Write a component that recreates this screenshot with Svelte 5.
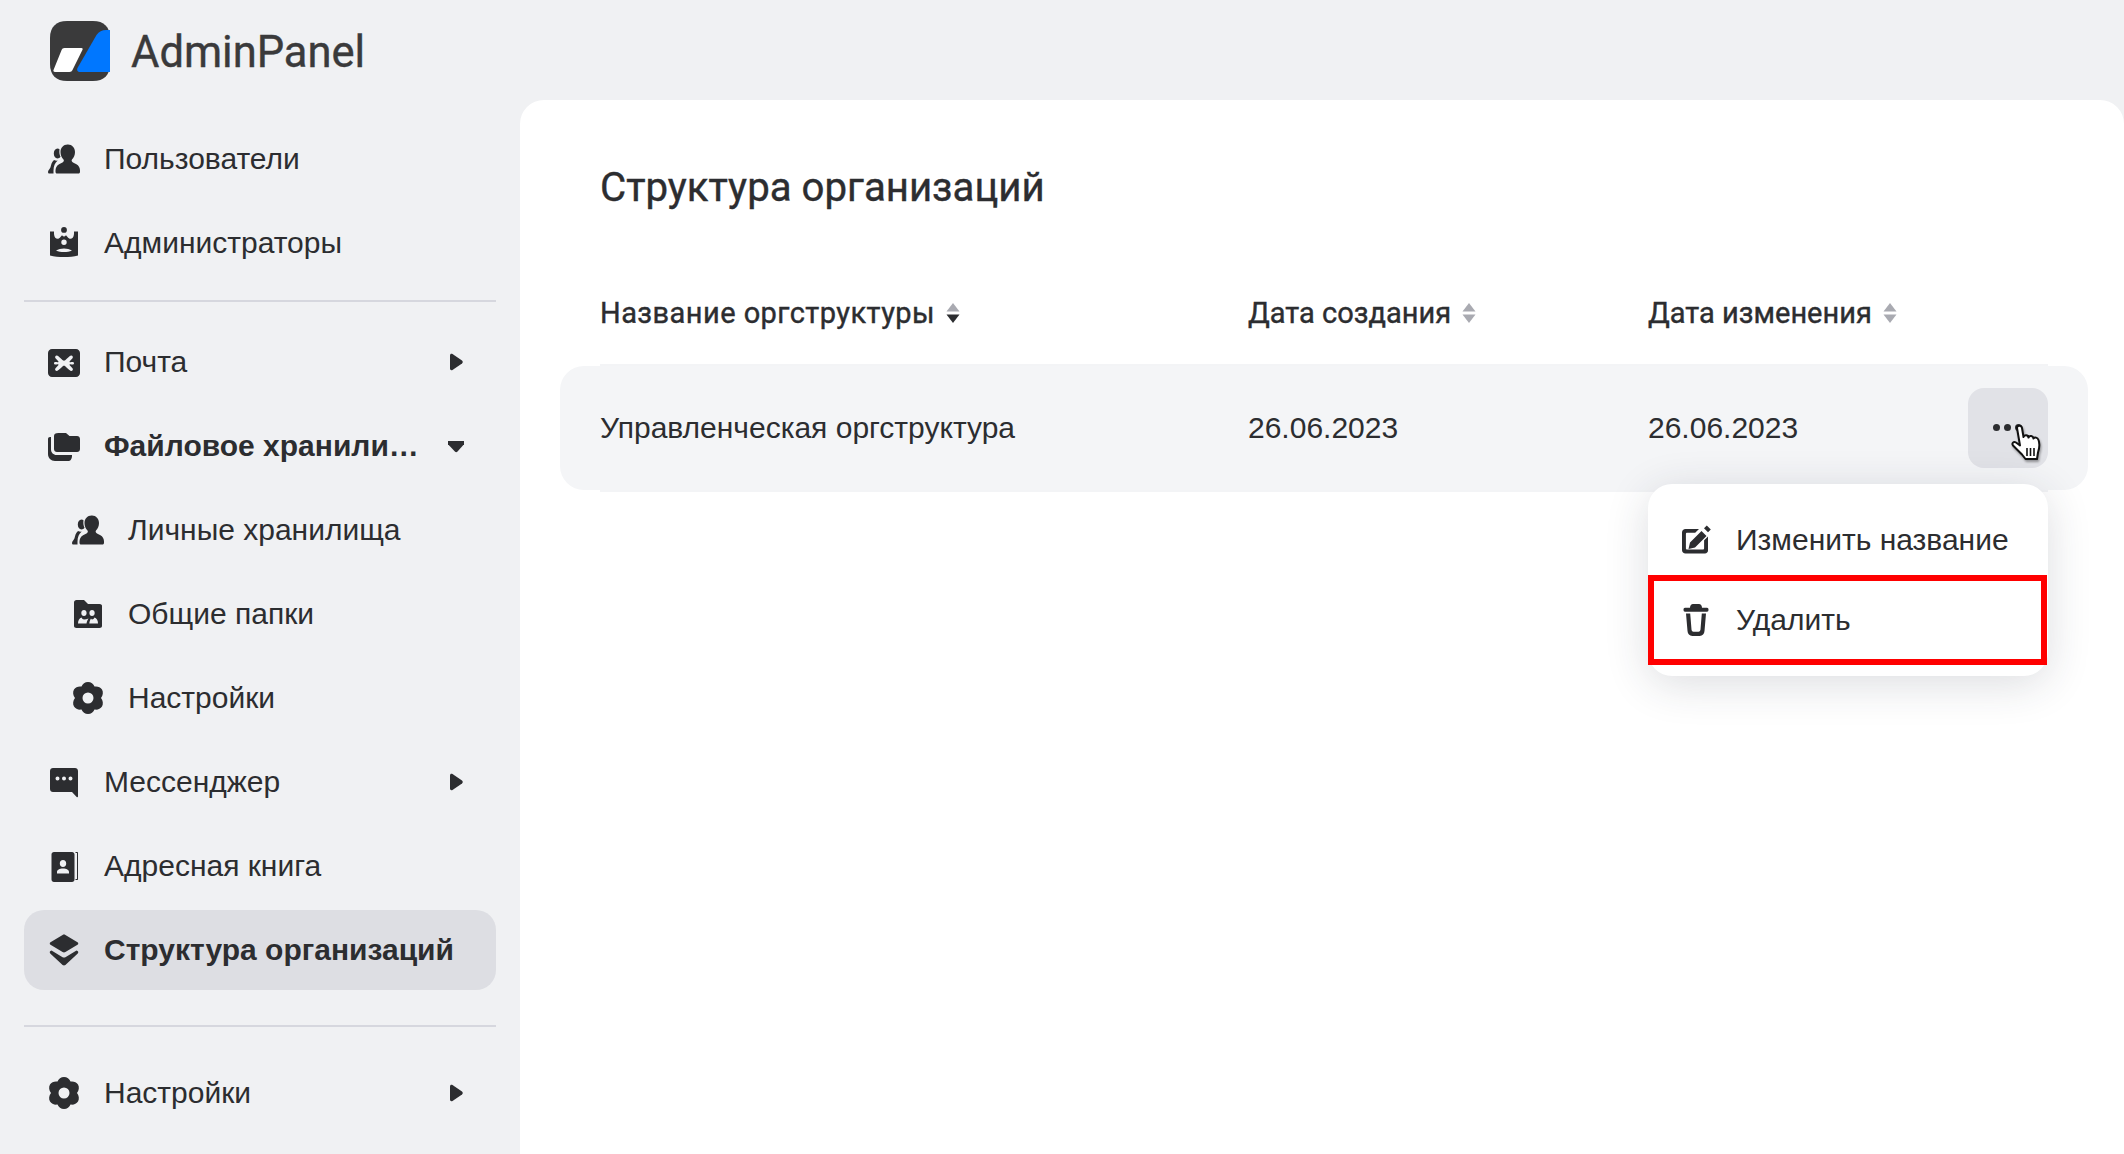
<script>
  const icons = {
    users:
      "M20 1.500c4 0 7 3.200 7 7.500 0 3.300-1.200 5.700-3 7.500-.7.900-.4 2.200 1 3l3 1.500c3 1.500 4 4 4 6.500v1.500c0 .8-.7 1.500-1.500 1.500H9c-.8 0-1.500-.7-1.500-1.500v-1.500c0-2.500 1-5 4-6.500l3-1.500c1.400-.8 1.700-2.100 1-3-1.800-1.800-3-4.200-3-7.500 0-4.300 3-7.500 7-7.500zM9.500 5.500c.8 0 1.500.3 2 .7-.4 2.700-.1 5.400 1 7.600-.7 1-1.800 1.700-3 1.700-2.200 0-3.700-2.200-3.700-5s1.500-5 3.700-5zM6 17c1 .5 2.300.7 3.700.6-2.800 2.200-4.200 5.800-4.200 10v2.900H1.200C.400 30.500 0 29.800 0 29c0-1.800 1.800-2.800 2.500-4.800.7-2.200 1-5.200 3.500-7.200z",
    crown:
      "M16 0a2.900 2.900 0 1 1 0 5.800A2.900 2.900 0 0 1 16 0zM2 4.500h4V7c.5 5.500 4.500 6 6.500 3L14 8.200c.8.800 1.400 1.200 2 1.200s1.200-.4 2-1.200L19.500 10c2 3 6 2.500 6.500-3V4.500h4v24c-4 1-9 1.500-14 1.500S6 29.500 2 28.500zM16 12.500a2.700 2.700 0 1 0 0 5.400 2.700 2.700 0 0 0 0-5.400zM8 23.500c2.400 1 5.100 1.500 8 1.500s5.600-.5 8-1.500c-2.300-1.300-5-2-8-2s-5.700.7-8 2z",
    mail:
      "M4 3h24c2.200 0 4 1.800 4 4v20c0 2.200-1.800 4-4 4H4c-2.200 0-4-1.800-4-4V7c0-2.200 1.800-4 4-4zM9 9.500c-1.500-.2-2.500 1.500-1.500 2.700l2.800 3c.5.600-.1 1.100-.8 1-1.400-.3-3.500-.7-3.500 1 0 1.800 2.100 1.400 3.500 1.100.7-.1 1.300.4.800 1l-2.800 3c-1 1.200 0 2.900 1.500 2.700 1-.1 4.500-3.600 5.800-4.700.7-.6 1.700-.6 2.400 0 1.300 1.100 4.800 4.600 5.800 4.700 1.500.2 2.500-1.500 1.500-2.700l-2.800-3c-.5-.6.1-1.100.8-1 1.400.3 3.500.7 3.500-1.100 0-1.700-2.100-1.300-3.500-1-.7.1-1.300-.4-.8-1l2.800-3c1-1.200 0-2.900-1.500-2.700-1 .1-4.500 3.600-5.800 4.700-.7.6-1.700.6-2.400 0C13.500 13.100 10 9.600 9 9.500z",
    folders:
      "M10.500 3h7.500l3.500 3H29c1.700 0 3 1.300 3 3v10c0 1.700-1.300 3-3 3H9c-1.700 0-3-1.300-3-3V6c0-1.700 1.300-3 4.500-3zM0 9c0-1.200.8-2 2-2h1v12.500C3 22.500 5.500 25 8.500 25H24v1c0 2-1.300 5-3 5H7c-4 0-7-3-7-7z",
    shared:
      "M4.500 2H12l4 4h11.500C29.500 6 30 7 30 8v20c0 1.200-1 2-2.500 2h-23C3 30 2 29.200 2 28V4.500C2 3 3 2 4.500 2zM12 12c-1.600 0-2.700 1.300-2.700 3s1.100 3 2.700 3c1.500 0 2.600-1.300 2.600-3s-1.100-3-2.600-3zM20 12c-1.500 0-2.600 1.300-2.600 3s1.100 3 2.600 3c1.600 0 2.700-1.300 2.700-3S21.600 12 20 12zM9.500 19.500C7.500 20.500 6 22 6 25.500h8.500c.3-2 .8-3 2-5-1.500.7-3 1-4.500 1-1 0-2-.7-2.500-2zM19 20.500c-.8 1-1.500 3-1.700 5H26c0-3.500-1.500-5-3.500-6-.5 1.300-1.500 2-2.500 2-.300 0-.700-.4-1-1z",
    gear:
      "M16 0C19 0 21.500 2 22.500 4.500 25.500 4 28.500 5 30 7.500 31.500 10 31 13.500 29 16 31 18.500 31.500 22 30 24.500 28.500 27 25.500 28 22.500 27.500 21.500 30 19 32 16 32 13 32 10.500 30 9.500 27.500 6.500 28 3.500 27 2 24.500 .5 22 1 18.500 3 16 1 13.500 .5 10 2 7.500 3.500 5 6.500 4 9.500 4.500 10.500 2 13 0 16 0ZM16 10.500a5.500 5.500 0 1 0 0 11 5.500 5.500 0 0 0 0-11Z",
    chat:
      "M5 2h22c1.700 0 3 1.300 3 3v25.500c0 .7-.8 1-1.300.5L24 26H5c-1.700 0-3-1.300-3-3V5c0-1.700 1.300-3 3-3zM9.500 10.500a2 2 0 1 0 0 4 2 2 0 0 0 0-4zM16 10.500a2 2 0 1 0 0 4 2 2 0 0 0 0-4zM22.500 10.500a2 2 0 1 0 0 4 2 2 0 0 0 0-4z",
    book:
      "M6 2h18c1.500 0 2.500 1 2.500 2.500v25c0 1.500-1 2.500-2.500 2.500H6c-1.500 0-2.500-1-2.500-2.500v-25C3.500 3 4.500 2 6 2zM15 10c-2 0-3.200 1.500-3.200 3.500S13 17 15 17s3.200-1.500 3.200-3.500S17 10 15 10zM15 18.500c-3.500 0-6 1.200-6 3.500v1.500h12V22c0-2.300-2.500-3.500-6-3.500zM27.500 2H29c.7 0 1 .4 1 1v26c0 .6-.3 1-1 1h-1.500v-1H29V3h-1.500z",
    layers:
      "M16 .5c.5 0 1 .1 1.400.4l12.100 7.300c1 .6 1 2 0 2.600l-12.100 7.300c-.9.500-1.900.500-2.800 0L2.500 10.800c-1-.6-1-2 0-2.600L14.600 .9c.4-.3.9-.4 1.400-.4zM3.500 16.500l11.100 6.700c.9.500 1.900.500 2.800 0l11.100-6.700 1 .6c1 .6 1 2 0 2.600L17.400 31c-.9.500-1.900.500-2.800 0L2.500 19.700c-1-.6-1-2 0-2.600z",
    edit:
      "M5.500 5H19l-3.800 3.800H7.200c-.8 0-1.300.5-1.300 1.300v14.100c0 .8.500 1.300 1.300 1.300h15.600c.8 0 1.300-.5 1.300-1.300v-8L28 12.400v14.100c0 1.600-1.300 3-3 3H5.500c-2 0-3.500-1.500-3.500-3.500V8.500C2 6.500 3.500 5 5.500 5zM21.500 7l5 5L15 23.500l-6.500 1.500L10 18.500zM26.800 1.500l4 4-2.800 2.800-4-4z",
    trash:
      "M13 0h6c1.600 0 3 1.500 3 3.700h5c1 0 1.500.8 1.500 2s-.5 2-1.500 2H5c-1 0-1.500-.8-1.500-2s.5-2 1.500-2h5C10 1.500 11.400 0 13 0zM6 9.500h4.200l1.300 16c.1 1 .7 2.200 2 2.200h5c1.300 0 1.900-1.200 2-2.200l1.300-16H26l-1.500 17.500c-.2 2.800-2 5-4.800 5h-7.400c-2.800 0-4.600-2.200-4.800-5z",
  };

  const nav = [
    { icon: "users", label: "Пользователи" },
    { icon: "crown", label: "Администраторы", sep: "narrow" },
    { icon: "mail", label: "Почта", arrow: "right" },
    { icon: "folders", label: "Файловое хранили…", arrow: "down", bold: true },
    { icon: "users", label: "Личные хранилища", sub: true },
    { icon: "shared", label: "Общие папки", sub: true },
    { icon: "gear", label: "Настройки", sub: true },
    { icon: "chat", label: "Мессенджер", arrow: "right" },
    { icon: "book", label: "Адресная книга" },
    { icon: "layers", label: "Структура организаций", bold: true, active: true, sep: "wide" },
    { icon: "gear", label: "Настройки", arrow: "right" },
  ];

  const columns = [
    { title: "Название оргструктуры", sorted: true },
    { title: "Дата создания" },
    { title: "Дата изменения" },
  ];
</script>

<div class="page">
  <aside class="sidebar">
    <div class="brand">
      <svg class="logo" viewBox="0 0 60 60">
        <path d="M17 0h26c11 0 17 6 17 17v26c0 11-6 17-17 17H17C6 60 0 54 0 43V17C0 6 6 0 17 0z" fill="#3a3a3b" />
        <path d="M60 9h-4c-4 0-7 1.500-9.500 5L27.500 47c-1 2 0 4 2.500 4h30z" fill="#0077ff" />
        <path d="M14.500 27h17c1 0 1.500.8 1 1.800L22.500 49c-.6 1.200-1.500 2-3 2H5c-1.500 0-2-1-1.400-2.200l8-19.800c.5-1.200 1.400-2 2.900-2z" fill="#fff" />
      </svg>
      <span class="brand-name">AdminPanel</span>
    </div>

    <nav class="nav">
      {#each nav as item}
        <div class="item" class:sub={item.sub} class:bold={item.bold} class:active={item.active}>
          <svg class="icon" viewBox="0 0 32 32"><path d={icons[item.icon]} fill-rule="evenodd" /></svg>
          <span class="label">{item.label}</span>
          {#if item.arrow === "right"}
            <svg class="arrow" viewBox="0 0 16 18"><path d="M2 2.500c0-1.500 1.300-2.200 2.500-1.400l9.500 6.400c1 .7 1 2.300 0 3l-9.500 6.400C3.300 17.700 2 17 2 15.500z" /></svg>
          {:else if item.arrow === "down"}
            <svg class="arrow" viewBox="0 0 16 18"><path d="M-.5 4h17c1 0 1.400 1 .8 1.800l-8 9c-.6.600-1.600.600-2.200 0l-8.400-9C-1.900 5-1.500 4-.5 4z" /></svg>
          {/if}
        </div>
        {#if item.sep}
          <div class="sep {item.sep}"></div>
        {/if}
      {/each}
    </nav>
  </aside>

  <main class="card">
    <h1 class="title">Структура организаций</h1>

    <div class="head grid">
      {#each columns as col}
        <div class="th" class:sorted={col.sorted}>
          {col.title}
          <svg class="sort" viewBox="0 0 14 20">
            <path class="up" d="M7 0l6.500 8.500H.5z" />
            <path class="down" d="M.5 11.500h13L7 20z" />
          </svg>
        </div>
      {/each}
    </div>

    <div class="row grid">
      <div class="row-bg"></div>
      <div class="td">Управленческая оргструктура</div>
      <div class="td">26.06.2023</div>
      <div class="td">26.06.2023</div>
      <button class="more">
        <span class="dots"><i></i><i></i><i></i></span>
        <svg class="hand" viewBox="0 0 32 38">
          <path d="M6 4C6 1 10.500 1 11 4l1.500 9c1-2.500 4.500-2.500 5 .5 1-2.300 4.500-2 5 1 1.200-1.800 4-1 5 1.500 1.500 4 1 8-.5 12.500L26 35H14.500l-3.500-4.500L2 21.500c-1.500-2 .5-4.500 3-3l4 3z" fill="#fff" stroke="#111" stroke-width="2" stroke-linejoin="round" />
          <path d="M16 24v8M19.500 24v8M23 24v8" stroke="#111" stroke-width="1.600" fill="none" />
        </svg>
      </button>

      <div class="menu">
        <div class="menu-item">
          <svg class="icon" viewBox="0 0 32 32"><path d={icons.edit} fill-rule="evenodd" /></svg>
          <span>Изменить название</span>
        </div>
        <div class="menu-item">
          <svg class="icon" viewBox="0 0 32 32"><path d={icons.trash} fill-rule="evenodd" /></svg>
          <span>Удалить</span>
        </div>
        <div class="highlight"></div>
      </div>
    </div>
  </main>
</div>

<style>
  :global(body) {
    margin: 0;
    background: #f0f1f3;
  }

  .page {
    display: flex;
    height: 1154px;
    overflow: hidden;
    color: #2c2d30;
    font-family: "Liberation Sans", Arial, sans-serif;
    font-size: 30px;
  }

  .sidebar {
    width: 520px;
    flex-shrink: 0;
    box-sizing: border-box;
    padding: 21px 24px 0;
  }

  .brand {
    display: flex;
    align-items: center;
    gap: 21px;
    padding-left: 26px;
    height: 60px;
    margin-bottom: 38px;
  }

  .logo {
    width: 60px;
    height: 60px;
    flex-shrink: 0;
  }

  .brand-name {
    position: relative;
    top: 1px;
    font-family: Roboto, sans-serif;
    font-size: 43.5px;
    -webkit-text-stroke: 0.4px #3a3a3b;
    color: #3a3a3b;
  }

  .nav {
    display: flex;
    flex-direction: column;
    gap: 4px;
  }

  .item {
    display: flex;
    align-items: center;
    height: 80px;
    padding: 0 24px;
    border-radius: 20px;
  }

  .item.sub {
    padding-left: 48px;
  }

  .item.bold {
    font-weight: 700;
  }

  .item.active {
    background: #dddee3;
  }

  .icon {
    width: 32px;
    height: 32px;
    flex-shrink: 0;
    margin-right: 24px;
    fill: #2c2d30;
  }

  .label {
    white-space: nowrap;
  }

  .arrow {
    width: 16px;
    height: 18px;
    margin-left: auto;
    margin-right: 8px;
    fill: #2c2d30;
  }

  .sep {
    height: 2px;
    background: #d6d7de;
  }

  .sep.narrow {
    margin: 13px 0 16px;
  }

  .sep.wide {
    margin: 31px 0 22px;
  }

  .card {
    flex: 1;
    margin-top: 100px;
    padding: 0 40px 0 80px;
    background: #fff;
    border-radius: 24px 24px 0 0;
  }

  .title {
    margin: 0 0 74px;
    padding-top: 61px;
    font-family: Roboto, sans-serif;
    font-size: 40.2px;
    line-height: 54px;
    font-weight: 400;
    -webkit-text-stroke: 0.4px #2c2d30;
  }

  .grid {
    display: grid;
    grid-template-columns: 648px 400px 1fr;
    width: 1448px;
  }

  .head {
    height: 48px;
    align-items: center;
    margin-bottom: 27px;
  }

  .th {
    display: flex;
    align-items: center;
    gap: 11px;
    font-family: Roboto, sans-serif;
    font-size: 29px;
    font-weight: 400;
    line-height: 44px;
    -webkit-text-stroke: 0.4px #2c2d30;
  }

  .th.sorted {
    letter-spacing: 0.45px;
  }

  .sort {
    width: 14px;
    height: 20px;
    flex-shrink: 0;
    fill: #a9aab1;
    stroke: none;
  }

  .th.sorted .down {
    fill: #2c2d30;
  }

  .row {
    position: relative;
    align-items: center;
    height: 124px;
    border-top: 2px solid #f3f4f6;
    border-bottom: 2px solid #f3f4f6;
  }

  .row-bg {
    position: absolute;
    inset: 0 -40px;
    background: #f4f5f7;
    border-radius: 24px;
  }

  .td {
    position: relative;
  }

  .more {
    position: absolute;
    right: 0;
    top: 22px;
    width: 80px;
    height: 80px;
    padding: 0;
    border: 0;
    border-radius: 16px;
    background: #e1e2e7;
  }

  .dots {
    position: absolute;
    left: 25px;
    top: 36px;
    display: flex;
    gap: 4px;
  }

  .dots i {
    width: 7px;
    height: 7px;
    border-radius: 50%;
    background: #2c2d30;
  }

  .hand {
    position: absolute;
    left: 43px;
    top: 36px;
    width: 32px;
    height: 38px;
    filter: drop-shadow(1px 2px 1px rgba(0, 0, 0, 0.35));
  }

  .menu {
    position: absolute;
    top: 118px;
    right: 0;
    width: 400px;
    box-sizing: border-box;
    padding: 16px 0;
    background: #fff;
    border-radius: 24px;
    box-shadow: 0 8px 44px rgba(40, 42, 60, 0.16);
  }

  .menu-item {
    display: flex;
    align-items: center;
    height: 80px;
    padding-left: 32px;
  }

  .highlight {
    position: absolute;
    left: 0;
    top: 91px;
    width: 399px;
    height: 90px;
    box-sizing: border-box;
    border: 6px solid #ff0000;
  }
</style>
